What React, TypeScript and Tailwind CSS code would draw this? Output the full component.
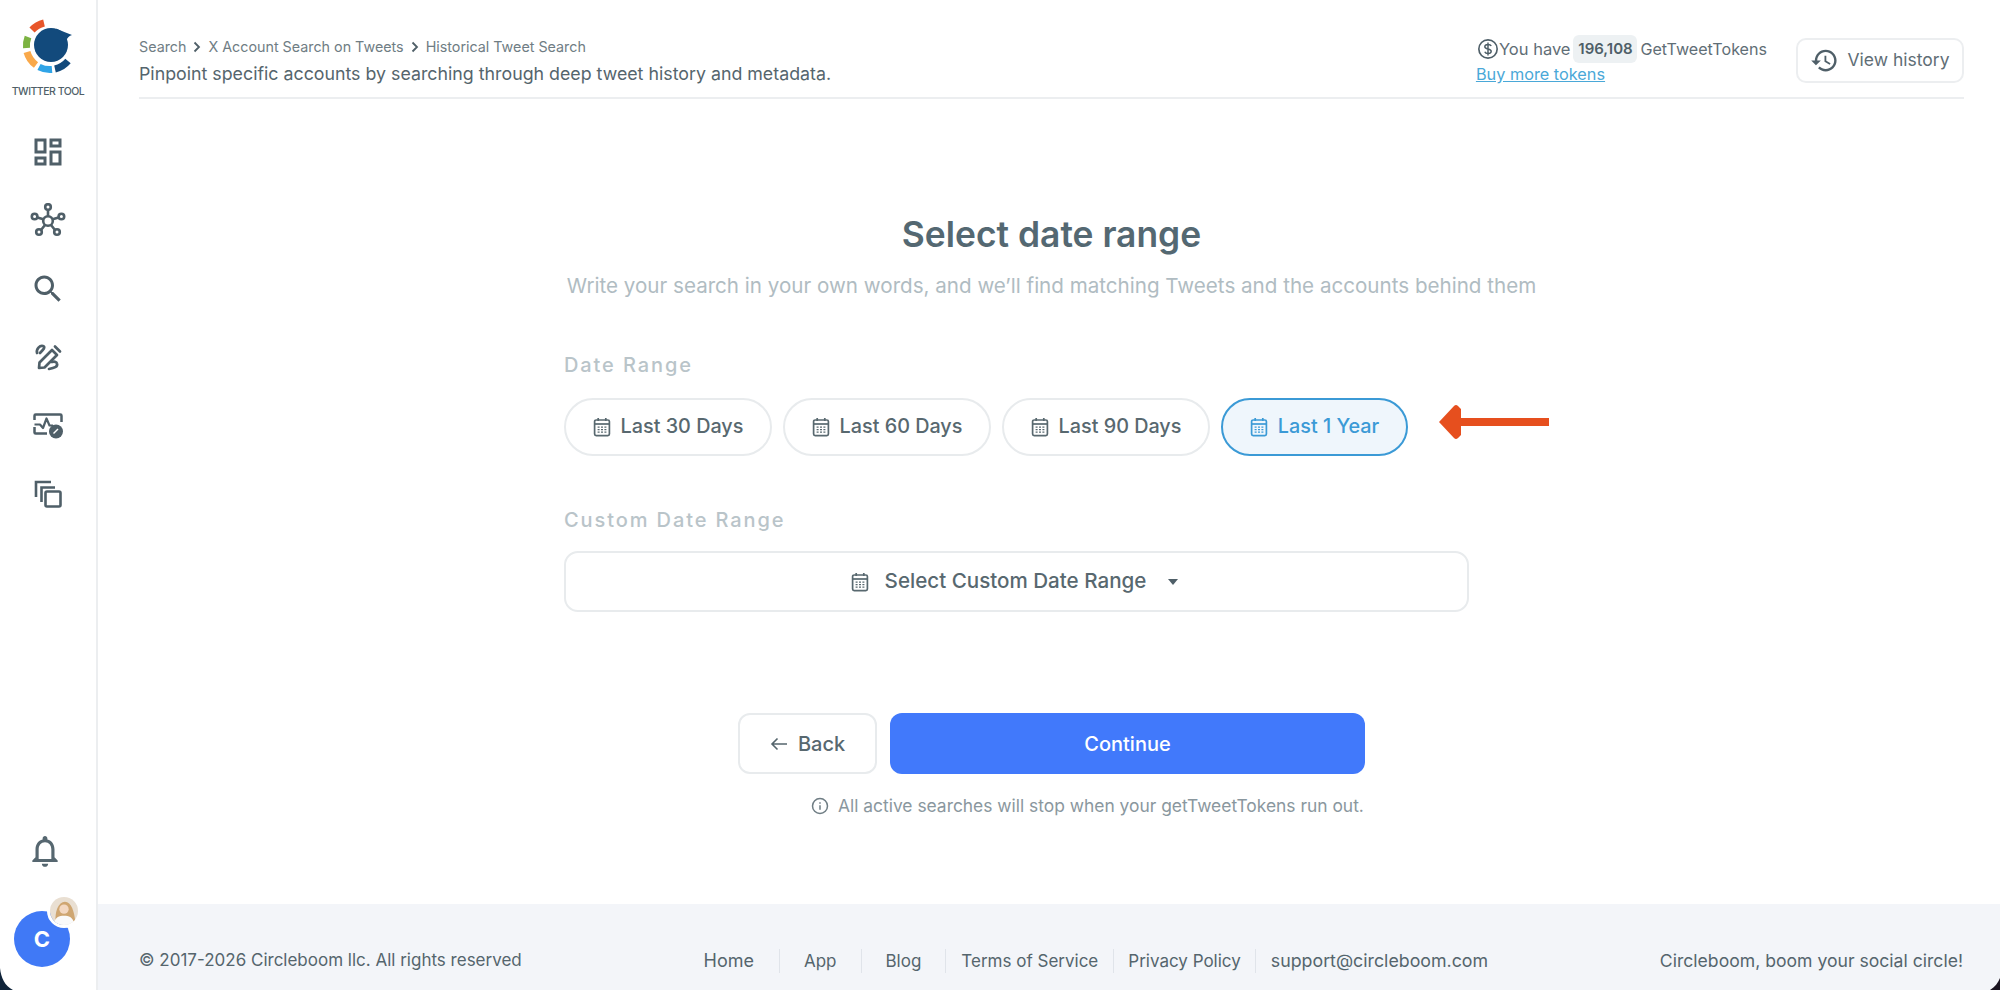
import React from "react";

const DARK = "#4f5f68";

function Cal({ className = "" }: { className?: string }) {
  return (
    <svg viewBox="0 0 18 20" className={className} fill="none" stroke="currentColor">
      <rect x="1.6" y="3" width="14.8" height="15.6" rx="1.6" strokeWidth="1.7" />
      <path d="M1.6 7h14.8" strokeWidth="1.7" />
      <path d="M5.2 1v3M12.8 1v3" strokeWidth="1.7" />
      <path d="M4.6 10.2h2M8 10.2h2M11.4 10.2h2M4.6 12.7h2M8 12.7h2M11.4 12.7h2M4.6 15.2h2M8 15.2h2M11.4 15.2h2" strokeWidth="1.2" />
    </svg>
  );
}

function Logo() {
  return (
    <svg viewBox="20 18 56 56" className="w-[56px] h-[56px]" fill="none" strokeWidth="7">
      <path d="M32 30 A24 24 0 0 1 44 23" stroke="#e8562a" />
      <path d="M28 37 A24 24 0 0 0 26.5 48" stroke="#7cb342" />
      <path d="M27 52 A24 24 0 0 0 36 65" stroke="#f9a94b" />
      <path d="M39 67 A24 24 0 0 0 52 69.5" stroke="#2fa4e7" />
      <path d="M55 69 A24 24 0 0 0 68 61" stroke="#124a7c" />
      <circle cx="51" cy="45" r="17" fill="#124a7c" stroke="none" />
      <path d="M56 28.5 Q64 32 72 35 Q68 36 66 41 Z" fill="#124a7c" stroke="none" />
    </svg>
  );
}

function Dash() {
  return (
    <svg viewBox="0 0 24 24" className="w-[36px] h-[36px]" fill={DARK}>
      <path d="M19 5v2h-4V5h4M9 5v6H5V5h4m10 8v6h-4v-6h4M9 17v2H5v-2h4M21 3h-8v6h8V3zM11 3H3v10h8V3zm10 8h-8v10h8V11zm-10 4H3v6h8v-6z" />
    </svg>
  );
}

function Hub() {
  return (
    <svg viewBox="0 0 36 36" className="w-[36px] h-[36px]" fill="none" stroke={DARK} strokeWidth="2.6">
      <circle cx="18" cy="18" r="4.8" />
      <circle cx="18" cy="4" r="2.8" />
      <circle cx="4.6" cy="13.5" r="2.8" />
      <circle cx="31.4" cy="13.5" r="2.8" />
      <circle cx="9" cy="29" r="2.8" />
      <circle cx="27" cy="29" r="2.8" />
      <path d="M18 7V13M7.4 14.5l6 1.8M28.6 14.5l-6 1.8M11 27l4-5M25 27l-4-5" />
    </svg>
  );
}

function Mag() {
  return (
    <svg viewBox="0 0 24 24" className="w-[36px] h-[36px]" fill={DARK}>
      <path d="M15.5 14h-.79l-.28-.27C15.41 12.59 16 11.11 16 9.5 16 5.91 13.09 3 9.5 3S3 5.91 3 9.5 5.91 16 9.5 16c1.61 0 3.09-.59 4.23-1.57l.27.28v.79l5 4.99L20.49 19l-4.99-5zm-6 0C7.01 14 5 11.99 5 9.5S7.01 5 9.5 5 14 7.01 14 9.5 11.99 14 9.5 14z" />
    </svg>
  );
}

function Draw() {
  return (
    <svg viewBox="0 0 28 28" className="w-[28px] h-[28px]" fill="none" stroke={DARK} strokeWidth="2.7" strokeLinecap="round" strokeLinejoin="round">
      <path d="M3 10 C2 6 6 2 9 3 C12 4 9 7 6 10" />
      <path d="M5 25 L5.5 19.5 L18 7 L23 12 L10.5 24.5 Z" />
      <path d="M21 3.5 L26 8.5" />
      <path d="M15 26 C20 25 24 24 23 20.5 C22.5 18.5 20 18.5 18 19" />
    </svg>
  );
}

function Monitor() {
  return (
    <svg viewBox="0 0 30 26" className="w-[30px] h-[26px]" fill="none" stroke={DARK} strokeWidth="2.5">
      <path d="M1.5 7V2.7C1.5 2 2 1.5 2.7 1.5H27.3C28 1.5 28.5 2 28.5 2.7V9" />
      <path d="M1.5 14V19.5C1.5 20.2 2 20.5 2.7 20.5H14" />
      <path d="M1.5 11.5H7L10 15L13.5 5.5L16.5 12.5H20" strokeLinejoin="round" strokeWidth="2.2" />
      <circle cx="23" cy="18.5" r="7" fill={DARK} stroke="none" />
      <path d="M20.5 20.5l4.5-4.5" stroke="#fff" strokeWidth="1.5" />
    </svg>
  );
}

function CopyIc() {
  return (
    <svg viewBox="0 0 28 28" className="w-[28px] h-[28px]" fill="none" stroke={DARK} strokeWidth="2.6">
      <path d="M2 17V2H17" />
      <path d="M7.5 22V7.5H21" />
      <rect x="11.5" y="11.5" width="15" height="15" rx="1.5" />
    </svg>
  );
}

function Bell() {
  return (
    <svg viewBox="0 0 24 24" className="w-[38px] h-[38px]" fill="#566770">
      <path d="M12 22c1.1 0 2-.9 2-2h-4c0 1.1.9 2 2 2zm6-6v-5c0-3.07-1.63-5.64-4.5-6.32V4c0-.83-.67-1.5-1.5-1.5s-1.5.67-1.5 1.5v.68C7.64 5.36 6 7.92 6 11v5l-2 2v1h16v-1l-2-2zm-2 1H8v-6c0-2.48 1.51-4.5 4-4.5s4 2.02 4 4.5v6z" />
    </svg>
  );
}

function Portrait() {
  return (
    <svg viewBox="0 0 30 30" className="w-full h-full">
      <rect width="30" height="30" fill="#e9dfd2" />
      <path d="M6 26 C5 16 9 5 16 5 C23 5 26 16 27 26Z" fill="#cfa671" />
      <circle cx="15" cy="13" r="5" fill="#f3d8c2" />
      <path d="M4 30 C5 21 10 20 15 20 C20 20 25 21 26 30Z" fill="#fafafa" />
    </svg>
  );
}

function Pill({ label, active }: { label: string; active?: boolean }) {
  return (
    <button
      className={
        active
          ? "shrink-0 h-[58px] w-[187px] rounded-[29px] border-2 border-[#3b9ad6] bg-[#eff6fc] text-[#3b9ad6] flex items-center justify-center gap-[10px] text-[19.8px] font-medium"
          : "shrink-0 h-[58px] w-[208px] rounded-[29px] border-2 border-[#e8ebed] bg-white text-[#58686f] flex items-center justify-center gap-[10px] text-[19.8px] font-medium"
      }
    >
      <Cal className="w-[18px] h-[20px]" />
      <span>{label}</span>
    </button>
  );
}

export default function App() {
  return (
    <div
      className="relative w-[2000px] h-[990px] flex bg-white overflow-hidden text-[#55656d]"
      style={{ fontFamily: "Inter, 'Noto Sans', sans-serif" }}
    >
      <aside className="w-[98px] shrink-0 border-r-2 border-[#eceef0] flex flex-col items-center pt-[18px] pb-[23px]">
        <Logo />
        <div className="mt-[11px] text-[10.5px] font-medium tracking-[-0.5px] text-[#4f5f68] leading-[14px]">TWITTER TOOL</div>
        <nav className="mt-[19px] flex flex-col items-center">
          <div className="h-[68.4px] flex items-center justify-center"><Dash /></div>
          <div className="h-[68.4px] flex items-center justify-center"><Hub /></div>
          <div className="h-[68.4px] flex items-center justify-center"><Mag /></div>
          <div className="h-[68.4px] flex items-center justify-center"><Draw /></div>
          <div className="h-[68.4px] flex items-center justify-center"><Monitor /></div>
          <div className="h-[68.4px] flex items-center justify-center"><CopyIc /></div>
        </nav>
        <div className="mt-auto -ml-[6px]"><Bell /></div>
        <div className="relative mt-[41px] -ml-[12px] w-[56px] h-[56px] rounded-full bg-[#4079f6] text-white flex items-center justify-center text-[22px] font-bold">
          C
          <div className="absolute -right-[11px] -top-[17px] w-[34px] h-[34px] rounded-full border-[3px] border-white overflow-hidden">
            <Portrait />
          </div>
        </div>
      </aside>

      <div className="flex-1 flex flex-col min-w-0">
        <main className="flex-1 min-h-0 flex flex-col pl-[41px] pr-[36px]">
          <header className="h-[99px] shrink-0 border-b-2 border-[#eceef0] flex items-start justify-between pt-[38px]">
            <div>
              <div className="flex items-center text-[14.3px] leading-[18px] text-[#6f7d84]">
                <span>Search</span>
                <svg viewBox="0 0 10 12" className="w-[10px] h-[12px] mx-[6px]" fill="none" stroke="#4f5f68" strokeWidth="1.8"><path d="M2.5 1.5L7 6l-4.5 4.5" /></svg>
                <span>X Account Search on Tweets</span>
                <svg viewBox="0 0 10 12" className="w-[10px] h-[12px] mx-[6px]" fill="none" stroke="#4f5f68" strokeWidth="1.8"><path d="M2.5 1.5L7 6l-4.5 4.5" /></svg>
                <span>Historical Tweet Search</span>
              </div>
              <div className="mt-[6px] text-[17.8px] leading-[24px] text-[#55656d]">Pinpoint specific accounts by searching through deep tweet history and metadata.</div>
            </div>
            <div className="flex items-start -mt-[3px]">
              <div className="flex flex-col">
                <div className="flex items-center text-[16.5px] leading-[28px] text-[#5f6e76]">
                  <svg viewBox="0 0 24 24" className="w-[22px] h-[22px] ml-[1px]" fill="none" stroke="#4f5f68" strokeWidth="1.8">
                    <circle cx="12" cy="12" r="10" />
                    <path d="M15.5 8.8C15 7.6 13.7 7 12 7c-2 0-3.5 1-3.5 2.5 0 3.3 7 1.7 7 5 0 1.5-1.5 2.5-3.5 2.5-1.7 0-3-.7-3.5-2M12 5v14" strokeWidth="1.6" />
                  </svg>
                  <span>You have</span>
                  <span className="ml-[3px] h-[28px] w-[64px] rounded-[6px] bg-[#edf1f3] flex items-center justify-center font-semibold text-[15px] text-[#4f5f68]">196,108</span>
                  <span className="ml-[3px] text-[16.1px]">GetTweetTokens</span>
                </div>
                <a className="text-[16.3px] leading-[20px] mt-[1px] text-[#4aa8d8] underline">Buy more tokens</a>
              </div>
              <button className="ml-[29px] mt-[3px] w-[168px] h-[45px] rounded-[10px] border-2 border-[#eceef0] bg-white flex items-center justify-center gap-[8px] text-[17.5px] text-[#5f6e76]">
                <svg viewBox="0 0 24 24" className="w-[29px] h-[29px]" fill="#4f5f68">
                  <path d="M13 3c-4.97 0-9 4.03-9 9H1l3.89 3.89.07.14L9 12H6c0-3.87 3.13-7 7-7s7 3.13 7 7-3.13 7-7 7c-1.93 0-3.68-.79-4.94-2.06l-1.42 1.42C8.27 19.99 10.51 21 13 21c4.97 0 9-4.03 9-9s-4.03-9-9-9zm-1 5v5l4.28 2.54.72-1.21-3.5-2.08V8H12z" />
                </svg>
                View history
              </button>
            </div>
          </header>

          <section className="w-[975px] mx-auto pt-[114px] flex flex-col">
            <h1 className="text-center text-[35.4px] leading-[44px] font-semibold text-[#546872]">Select date range</h1>
            <p className="mt-[15px] text-center text-[20.6px] leading-[28px] text-[#b0bcc2] whitespace-nowrap">
              Write your search in your own words, and we’ll find matching Tweets and the accounts behind them
            </p>
            <div className="mt-[52px] text-[20px] leading-[26px] font-medium tracking-[1.9px] text-[#b9c4c9]">Date Range</div>
            <div className="mt-[20px] flex items-center gap-[11px]">
              <Pill label="Last 30 Days" />
              <Pill label="Last 60 Days" />
              <Pill label="Last 90 Days" />
              <Pill label="Last 1 Year" active />
              <svg viewBox="0 0 112 36" className="shrink-0 ml-[19px] -mt-[10px] w-[112px] h-[36px]" fill="#e64f1e">
                <path d="M1 18 L16 2 Q18 0 20 2 L23 5 V14 H111 V22 H23 V31 L20 34 Q18 36 16 34 Z" />
              </svg>
            </div>
            <div className="mt-[51px] text-[20px] leading-[26px] font-medium tracking-[1.9px] text-[#b9c4c9]">Custom Date Range</div>
            <button className="mt-[18px] w-[905px] h-[61px] pr-[4px] rounded-[14px] border-2 border-[#e8ebed] bg-white flex items-center justify-center text-[20.6px] font-medium text-[#58686f]">
              <Cal className="w-[18px] h-[20px]" />
              <span className="ml-[16px]">Select Custom Date Range</span>
              <svg viewBox="0 0 10 6" className="ml-[22px] w-[10px] h-[6px]" fill="#4f5f68"><path d="M0 0h10L5 6z" /></svg>
            </button>
            <div className="mt-[101px] ml-[174px] flex gap-[13px]">
              <button className="w-[139px] h-[61px] rounded-[12px] border-2 border-[#e8ebed] bg-white flex items-center justify-center gap-[10px] text-[20px] font-medium text-[#58686f]">
                <svg viewBox="0 0 18 14" className="w-[18px] h-[14px]" fill="none" stroke="#55656d" strokeWidth="1.6"><path d="M17 7H2M7.5 1.5L2 7l5.5 5.5" /></svg>
                Back
              </button>
              <button className="w-[475px] h-[61px] rounded-[12px] bg-[#4179fb] text-white text-[20px] font-medium">Continue</button>
            </div>
            <div className="mt-[21px] ml-[247px] flex items-center gap-[9px] text-[17.4px] leading-[22px] text-[#8a979e] whitespace-nowrap">
              <svg viewBox="0 0 24 24" className="w-[18px] h-[18px]" fill="none" stroke="#6f7d84" strokeWidth="2">
                <circle cx="12" cy="12" r="10" />
                <path d="M12 11v6M12 7v2" />
              </svg>
              All active searches will stop when your getTweetTokens run out.
            </div>
          </section>
        </main>

        <footer className="h-[86px] shrink-0 bg-[#f3f5f9] pt-[28px] pl-[41px] pr-[37px] flex items-center justify-between text-[17px] text-[#55656d]">
          <span>© 2017-2026 Circleboom llc. All rights reserved</span>
          <div className="ml-[10px] flex items-center leading-[24px]">
            <span className="pr-[25px] text-[18px]">Home</span>
            <span className="px-[24px] border-l border-[#e0e4ea]">App</span>
            <span className="px-[24px] border-l border-[#e0e4ea]">Blog</span>
            <span className="px-[15px] border-l border-[#e0e4ea]">Terms of Service</span>
            <span className="px-[14px] border-l border-[#e0e4ea]">Privacy Policy</span>
            <span className="pl-[15px] border-l border-[#e0e4ea] text-[17.8px]">support@circleboom.com</span>
          </div>
          <span className="text-[17.6px]">Circleboom, boom your social circle!</span>
        </footer>
      </div>

      <svg viewBox="0 0 2000 990" className="absolute inset-0 w-[2000px] h-[990px] pointer-events-none">
        <path d="M0 968 C1 978 5 986 13 990 L0 990Z" fill="#10243a" />
        <path d="M1990 990 C1995 987 1998 983 2000 978 L2000 990Z" fill="#1a1420" />
      </svg>
    </div>
  );
}
